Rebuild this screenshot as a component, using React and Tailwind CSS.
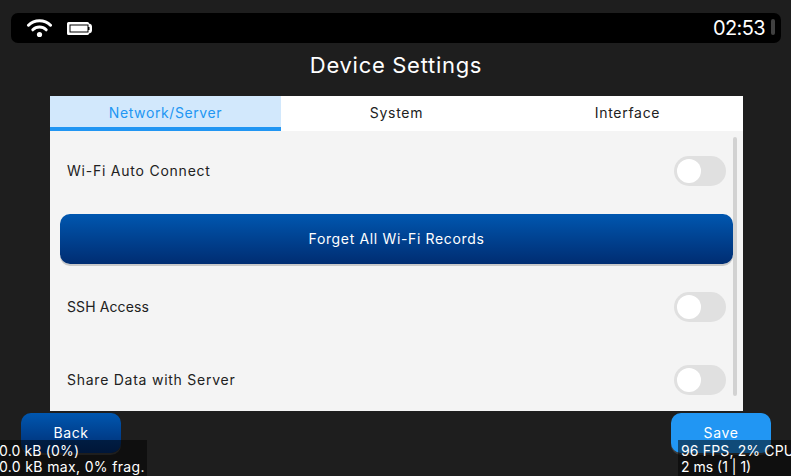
const tabs = [
  { label: "Network/Server", active: true, fit: "tracking-[0.6px]" },
  { label: "System", active: false, fit: "tracking-[0.7px]" },
  { label: "Interface", active: false, fit: "tracking-[0.7px]" },
];

function WifiIcon() {
  return (
    <svg width="26" height="20" viewBox="0 0 26 20" fill="none" stroke="#fff" strokeLinecap="round">
      <path d="M2.5 7.2C8.5 1.1 18.5 1.1 24.5 7.2" strokeWidth="3" />
      <path d="M6.8 11.8C10.6 8 16.4 8 20.2 11.8" strokeWidth="3" />
      <circle cx="13.5" cy="16.5" r="2.6" fill="#fff" stroke="none" />
    </svg>
  );
}

function BatteryIcon() {
  return (
    <svg width="25" height="13" viewBox="0 0 25 13" fill="none">
      <path
        d="M1.5 0H20.5Q22 0 22.3 1.8H23Q25 2.2 25 4.5V8.5Q25 10.8 23 11.2H22.3Q22 13 20.5 13H1.5Q0 13 0 11.5V1.5Q0 0 1.5 0Z"
        fill="#fff"
      />
      <path d="M2.5 2.5H21.5V5H22.5V8H21.5V10.5H2.5Z" fill="#000" />
      <path d="M3.5 3.5H20.5V9.5H3.5Z" fill="#fff" />
    </svg>
  );
}

function Switch() {
  return (
    <span className="flex h-[30px] w-[52px] items-center rounded-full bg-[#e0e0e0] px-[3px]">
      <span className="size-6 rounded-full bg-white" />
    </span>
  );
}

function Row({ label, fit }) {
  return (
    <div className="flex h-[30px] items-center justify-between pr-[7px] pl-[7px] text-[#212121]">
      <span className={fit}>{label}</span>
      <Switch />
    </div>
  );
}

export default function App() {
  return (
    <div className="relative flex h-[476px] w-[791px] flex-col overflow-hidden bg-[#1e1e1e] pt-[13px] font-['Inter',sans-serif] text-[14px] leading-4 whitespace-nowrap text-white">
      <header className="mr-[10px] ml-[11px] flex h-[30px] shrink-0 items-center rounded-[7px] bg-black pr-[6px] pl-[15px]">
        <WifiIcon />
        <span className="ml-[15px]">
          <BatteryIcon />
        </span>
        <time className="ml-auto text-[20px] leading-[30px] tracking-[-0.6px]">02:53</time>
        <span className="mb-[2px] ml-[6px] h-4 w-1 rounded-full bg-[#404040]" />
      </header>

      <h1 className="mt-[8px] h-[45px] shrink-0 pl-[1px] text-center text-[22px] leading-7 tracking-[0.7px]">
        Device Settings
      </h1>

      <main className="mr-[48px] ml-[50px] flex h-[315px] shrink-0 flex-col bg-[#f4f4f4]">
        <nav className="grid h-[35px] shrink-0 grid-cols-3 bg-white text-[#212121]">
          {tabs.map((tab) => (
            <button
              key={tab.label}
              className={
                tab.active
                  ? "border-b-4 border-[#2196f3] bg-[#d2e8fc] pt-[3px] text-[#2196f3]"
                  : "pb-[1px]"
              }
            >
              <span className={tab.fit}>{tab.label}</span>
            </button>
          ))}
        </nav>
        <div className="flex h-[280px]">
          <div className="w-[683px] pt-[25px] pl-[10px]">
            <Row label="Wi-Fi Auto Connect" fit="tracking-[0.77px]" />
            <button className="mt-[28px] mb-[28px] block h-[50px] w-full rounded-[10px] bg-linear-to-b from-[#0057b0] to-[#002d72] tracking-[0.65px] shadow-[0_2px_0_#c9c9c9]">
              Forget All Wi-Fi Records
            </button>
            <Row label="SSH Access" fit="tracking-[0.1px]" />
            <div className="mt-[43px]">
              <Row label="Share Data with Server" fit="tracking-[0.75px]" />
            </div>
          </div>
          <div className="mt-[6px] h-[259px] w-1 rounded-full bg-[#d2d2d2]" />
        </div>
      </main>

      <footer className="mt-[2px] mr-[20px] ml-[21px] flex justify-between">
        <button className="h-10 w-[100px] rounded-[10px] bg-linear-to-b from-[#0057b0] to-[#002d72] tracking-[0.6px] shadow-[0_2px_0_#3c3c3c]">
          Back
        </button>
        <button className="h-10 w-[100px] rounded-[10px] bg-[#2196f3] tracking-[0.6px] shadow-[0_2px_0_#3c3c3c]">
          Save
        </button>
      </footer>

      <aside className="absolute top-[440px] left-0 h-9 w-[147px] bg-black/50 pt-[3px]">
        <div className="-ml-px tracking-[0.15px]">0.0 kB (0%)</div>
        <div className="-ml-px tracking-[0.35px]">0.0 kB max, 0% frag.</div>
      </aside>
      <aside className="absolute top-[440px] left-[678px] h-9 w-[113px] overflow-hidden bg-black/50 pt-[3px] pl-[3px]">
        <div className="tracking-[0.15px]">96 FPS, 2% CPU</div>
        <div>2 ms (1 | 1)</div>
      </aside>
    </div>
  );
}
